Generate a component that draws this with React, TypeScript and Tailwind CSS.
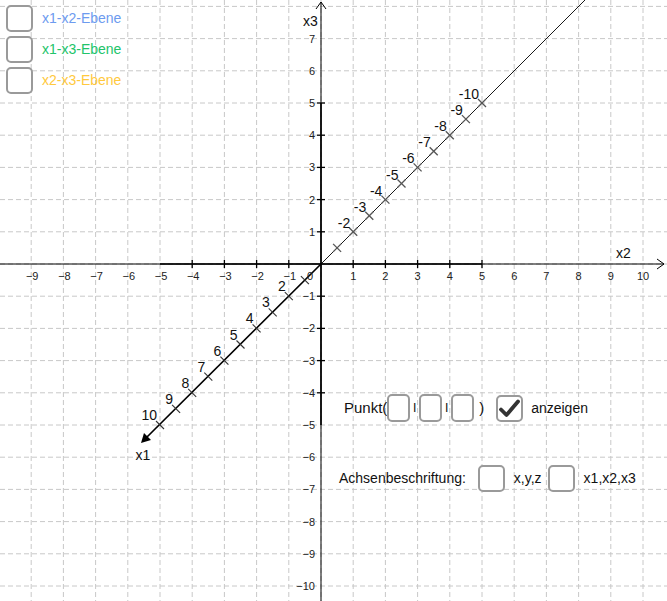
import React from 'react';

const OX = 321;
const OY = 264;
const U = 32.2;
const D = 16.1; // x1 step, drawn diagonally

const font = '"Liberation Sans", Arial, sans-serif';

const range = (a: number, b: number) => Array.from({ length: b - a + 1 }, (_, i) => a + i);
const minus = (n: number) => (n < 0 ? '\u2212' + Math.abs(n) : String(n));

function Box({ w = 27, h = 27, checked = false }: { w?: number; h?: number; checked?: boolean }) {
  return (
    <div
      className="shrink-0 rounded-[5px] border-2 border-[#9a9a9a] bg-white flex items-center justify-center"
      style={{ width: w, height: h }}
    >
      {checked && (
        <svg width="23" height="23" viewBox="0 0 23 23">
          <path d="M3 12.5 L8.5 18 L20 4.5" fill="none" stroke="#333" strokeWidth="3.8" strokeLinecap="round" strokeLinejoin="round" />
        </svg>
      )}
    </div>
  );
}

function Graph() {
  const x1Point = (t: number) => [OX - D * t, OY + D * t];
  return (
    <svg width="667" height="601" className="block" style={{ fontFamily: font }}>
      {/* grid */}
      <g stroke="#c8c8c8" strokeWidth="1" strokeDasharray="5 3">
        {range(-9, 10).map((k) => (
          <line key={'v' + k} x1={OX + k * U} y1={0} x2={OX + k * U} y2={601} />
        ))}
        {range(-10, 8).map((k) => (
          <line key={'h' + k} x1={0} y1={OY - k * U} x2={667} y2={OY - k * U} />
        ))}
      </g>

      {/* x2 axis */}
      <line x1={0} y1={OY} x2={664} y2={OY} stroke="#000" strokeWidth="1" />
      <line x1={OX - 5 * U} y1={OY} x2={OX + 5 * U} y2={OY} stroke="#000" strokeWidth="1.6" />
      <polyline points={`657,259 664,264 657,269`} fill="none" stroke="#000" strokeWidth="1" />
      {range(-4, 5).filter((k) => k !== 0).map((k) => (
        <line key={'tx' + k} x1={OX + k * U} y1={OY - 4} x2={OX + k * U} y2={OY + 4} stroke="#000" strokeWidth="1.3" />
      ))}

      {/* x3 axis */}
      <line x1={OX} y1={2} x2={OX} y2={601} stroke="#000" strokeWidth="1" />
      <line x1={OX} y1={OY - 5 * U} x2={OX} y2={OY + 5 * U} stroke="#000" strokeWidth="1.6" />
      <polyline points={`316,9 321,2 326,9`} fill="none" stroke="#000" strokeWidth="1" />
      {range(-4, 5).filter((k) => k !== 0).map((k) => (
        <line key={'ty' + k} x1={OX - 4} y1={OY - k * U} x2={OX + 4} y2={OY - k * U} stroke="#000" strokeWidth="1.3" />
      ))}

      {/* x1 axis */}
      <line x1={OX} y1={OY} x2={585} y2={0} stroke="#000" strokeWidth="0.9" />
      <line x1={OX} y1={OY} x2={146} y2={438} stroke="#000" strokeWidth="1.7" />
      <polygon points="141,443 151,440 144,433" fill="#000" />
      {range(1, 10).map((t) => {
        const [x, y] = x1Point(t);
        return <line key={'p' + t} x1={x - 4} y1={y - 4} x2={x + 4} y2={y + 4} stroke="#333" strokeWidth="1.1" />;
      })}
      {range(1, 10).map((t) => {
        const [x, y] = x1Point(-t);
        return (
          <g key={'n' + t} stroke="#555" strokeWidth="1.3">
            <line x1={x - 4} y1={y - 4} x2={x + 4} y2={y + 4} />
            <line x1={x - 4} y1={y + 4} x2={x + 4} y2={y - 4} />
          </g>
        );
      })}

      {/* axis numbers */}
      <g fontSize="11" fill="#222">
        {range(-9, 10).filter((k) => k !== 0).map((k) => (
          <text key={'lx' + k} x={OX + k * U + (k < 0 ? 1 : 0)} y={280} textAnchor="middle">
            {minus(k)}
          </text>
        ))}
        {range(-10, 7).filter((k) => k !== 0).map((k) => (
          <text key={'ly' + k} x={315} y={OY - k * U + 4} textAnchor="end">
            {minus(k)}
          </text>
        ))}
        <text x={310} y={280} textAnchor="middle">0</text>
      </g>

      <g fontSize="14" fill="#111">
        {range(2, 10).map((t) => {
          const [x, y] = x1Point(t);
          return (
            <text key={'a' + t} x={x - 3} y={y - 5} textAnchor="end">
              {t}
            </text>
          );
        })}
        {range(2, 10).map((t) => {
          const [x, y] = x1Point(-t);
          return (
            <text key={'b' + t} x={x - 3} y={y - 4} textAnchor="end">
              -{t}
            </text>
          );
        })}
        <text x={143} y={460} textAnchor="middle">x1</text>
        <text x={616} y={258}>x2</text>
        <text x={303} y={26}>x3</text>
      </g>
    </svg>
  );
}

export default function App() {
  return (
    <div className="relative w-[667px] h-[601px] bg-white overflow-hidden" style={{ fontFamily: font }}>
      <Graph />

      <div className="absolute left-[6px] top-[5px] flex flex-col gap-[4px] text-[14px]">
        <div className="flex items-center gap-[9px]">
          <Box />
          <span className="text-[#6d9bef]">x1-x2-Ebene</span>
        </div>
        <div className="flex items-center gap-[9px]">
          <Box />
          <span className="text-[#22c46a]">x1-x3-Ebene</span>
        </div>
        <div className="flex items-center gap-[9px]">
          <Box />
          <span className="text-[#ffc93e]">x2-x3-Ebene</span>
        </div>
      </div>

      <div className="absolute left-[344px] top-[394px] flex items-center text-[15px] text-[#111] h-[28px]">
        <span>Punkt(</span>
        <Box w={23} h={28} />
        <span className="px-[3px] text-[13px]">l</span>
        <Box w={23} h={28} />
        <span className="px-[3px] text-[13px]">l</span>
        <Box w={23} h={28} />
        <span className="ml-[5px]">)</span>
        <div className="ml-[12px]">
          <Box checked />
        </div>
        <span className="ml-[8px] text-[14px]">anzeigen</span>
      </div>

      <div className="absolute left-[339px] top-[464px] flex items-center text-[14px] text-[#111] h-[28px]">
        <span>Achsenbeschriftung:</span>
        <div className="ml-[12px]">
          <Box />
        </div>
        <span className="ml-[9px]">x,y,z</span>
        <div className="ml-[6px]">
          <Box />
        </div>
        <span className="ml-[9px]">x1,x2,x3</span>
      </div>
    </div>
  );
}
